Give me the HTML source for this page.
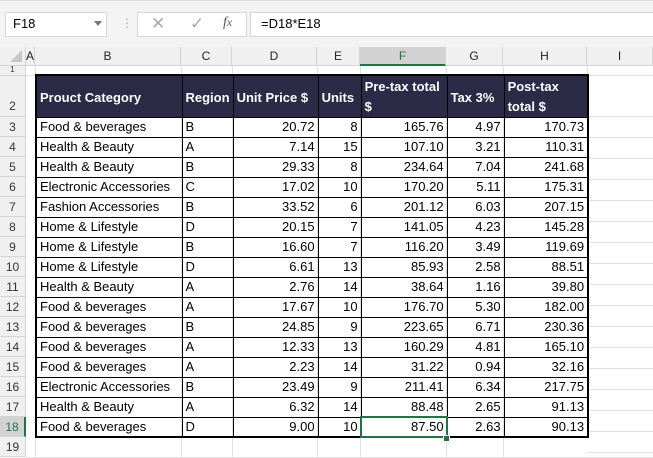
<!DOCTYPE html>
<html><head><style>
body{margin:0;width:653px;height:458px;background:#fff;font-family:"Liberation Sans",sans-serif;position:relative;overflow:hidden}
.top{position:absolute;left:0;top:0;width:653px;height:47px;background:#f3f3f3;border-top:1px solid #dcdcdc}
.box{position:absolute;background:#fff;border:1px solid #d6d6d6;top:12px;height:23px}
.ch{position:absolute;top:47px;height:19px;background:#f0f0f0;border-right:1px solid #d4d4d4;border-bottom:1px solid #d4d4d4;box-sizing:border-box;font-size:12px;text-align:center;line-height:19px;color:#222}
.rh{position:absolute;left:0;width:26px;background:#f0f0f0;border-bottom:1px solid #d4d4d4;border-right:1px solid #d4d4d4;box-sizing:border-box;font-size:12px;text-align:center;color:#333}
table{position:absolute;left:35px;top:74px;border-collapse:collapse;font-size:13px;table-layout:fixed}
td{border:1px solid #000;padding:0 3px;height:19px;white-space:nowrap;overflow:hidden;line-height:18px;box-sizing:border-box}
tr{height:20px}
td.n{text-align:right}
tr.h{height:42px}
tr.h td{background:#2b2a47;color:#fff;font-weight:bold;height:42px;line-height:20px;vertical-align:bottom;white-space:normal}
.gl{position:absolute;background:#e1e1e1}
</style></head><body>
<div class="top"></div>
<div class="box" style="left:5px;width:100px"><span style="position:absolute;left:7px;top:3px;font-size:13px">F18</span><span style="position:absolute;left:88px;top:8px;border-left:4px solid transparent;border-right:4px solid transparent;border-top:5px solid #777"></span></div>
<div style="position:absolute;left:121px;top:16px;color:#aaa;font-size:12px">⋮</div>
<div class="box" style="left:137px;width:108px"><span style="position:absolute;left:13px;top:1px;font-size:17px;color:#aaa">✕</span><span style="position:absolute;left:52px;top:1px;font-size:17px;color:#aaa">✓</span><span style="position:absolute;left:85px;top:2px;font-size:14px;font-style:italic;font-family:'Liberation Serif',serif;color:#555">f<small>x</small></span></div>
<div class="box" style="left:250px;width:410px"><span style="position:absolute;left:10px;top:3px;font-size:13px">=D18*E18</span></div>

<div class="ch" style="left:0;width:26px"><span style="position:absolute;right:3px;bottom:3px;border-left:12px solid transparent;border-bottom:12px solid #c6c6c6"></span></div>
<div class="ch" style="left:26px;width:9px">A</div>
<div class="ch" style="left:35px;width:146px">B</div>
<div class="ch" style="left:181px;width:51px">C</div>
<div class="ch" style="left:232px;width:85px">D</div>
<div class="ch" style="left:317px;width:43px">E</div>
<div class="ch" style="left:360px;width:86px;background:#d2d2d2;border-bottom:2px solid #217346;color:#217346">F</div>
<div class="ch" style="left:446px;width:57px">G</div>
<div class="ch" style="left:503px;width:84px">H</div>
<div class="ch" style="left:587px;width:66px">I</div>

<div class="rh" style="top:66px;height:10px;font-size:8px;line-height:8px">1</div>
<div class="rh" style="top:76px;height:41px;line-height:60px">2</div>
<div class="rh" style="top:117px;height:20px;line-height:20px">3</div>
<div class="rh" style="top:137px;height:20px;line-height:20px">4</div>
<div class="rh" style="top:157px;height:20px;line-height:20px">5</div>
<div class="rh" style="top:177px;height:20px;line-height:20px">6</div>
<div class="rh" style="top:197px;height:20px;line-height:20px">7</div>
<div class="rh" style="top:217px;height:20px;line-height:20px">8</div>
<div class="rh" style="top:237px;height:20px;line-height:20px">9</div>
<div class="rh" style="top:257px;height:20px;line-height:20px">10</div>
<div class="rh" style="top:277px;height:20px;line-height:20px">11</div>
<div class="rh" style="top:297px;height:20px;line-height:20px">12</div>
<div class="rh" style="top:317px;height:20px;line-height:20px">13</div>
<div class="rh" style="top:337px;height:20px;line-height:20px">14</div>
<div class="rh" style="top:357px;height:20px;line-height:20px">15</div>
<div class="rh" style="top:377px;height:20px;line-height:20px">16</div>
<div class="rh" style="top:397px;height:20px;line-height:20px">17</div>
<div class="rh" style="top:417px;height:20px;line-height:20px;background:#d2d2d2;color:#217346;border-right:2px solid #217346">18</div>
<div class="rh" style="top:437px;height:20px;line-height:20px">19</div>

<div class="gl" style="left:35px;top:66px;width:1px;height:392px"></div>
<div class="gl" style="left:181px;top:66px;width:1px;height:392px"></div>
<div class="gl" style="left:232px;top:66px;width:1px;height:392px"></div>
<div class="gl" style="left:317px;top:66px;width:1px;height:392px"></div>
<div class="gl" style="left:360px;top:66px;width:1px;height:392px"></div>
<div class="gl" style="left:446px;top:66px;width:1px;height:392px"></div>
<div class="gl" style="left:503px;top:66px;width:1px;height:392px"></div>
<div class="gl" style="left:587px;top:66px;width:1px;height:392px"></div>
<div class="gl" style="left:26px;top:75px;width:627px;height:1px"></div>
<div class="gl" style="left:26px;top:457px;width:627px;height:1px"></div>
<div class="gl" style="left:587px;top:96px;width:66px;height:361px;background:repeating-linear-gradient(#fff 0 20px,#e1e1e1 20px 21px)"></div>

<table style="border:2px solid #000">
<colgroup><col style="width:146px"><col style="width:51px"><col style="width:85px"><col style="width:43px"><col style="width:86px"><col style="width:57px"><col style="width:84px"></colgroup>
<tr class="h"><td style="vertical-align:middle;padding-top:4px">Prouct Category</td><td style="vertical-align:middle;padding-top:4px">Region</td><td style="vertical-align:middle;padding-top:4px">Unit Price $</td><td style="vertical-align:middle;padding-top:4px">Units</td><td>Pre-tax total $</td><td style="vertical-align:middle;padding-top:4px">Tax 3%</td><td>Post-tax total $</td></tr>
<tr><td>Food &amp; beverages</td><td>B</td><td class="n">20.72</td><td class="n">8</td><td class="n">165.76</td><td class="n">4.97</td><td class="n">170.73</td></tr>
<tr><td>Health &amp; Beauty</td><td>A</td><td class="n">7.14</td><td class="n">15</td><td class="n">107.10</td><td class="n">3.21</td><td class="n">110.31</td></tr>
<tr><td>Health &amp; Beauty</td><td>B</td><td class="n">29.33</td><td class="n">8</td><td class="n">234.64</td><td class="n">7.04</td><td class="n">241.68</td></tr>
<tr><td>Electronic Accessories</td><td>C</td><td class="n">17.02</td><td class="n">10</td><td class="n">170.20</td><td class="n">5.11</td><td class="n">175.31</td></tr>
<tr><td>Fashion Accessories</td><td>B</td><td class="n">33.52</td><td class="n">6</td><td class="n">201.12</td><td class="n">6.03</td><td class="n">207.15</td></tr>
<tr><td>Home &amp; Lifestyle</td><td>D</td><td class="n">20.15</td><td class="n">7</td><td class="n">141.05</td><td class="n">4.23</td><td class="n">145.28</td></tr>
<tr><td>Home &amp; Lifestyle</td><td>B</td><td class="n">16.60</td><td class="n">7</td><td class="n">116.20</td><td class="n">3.49</td><td class="n">119.69</td></tr>
<tr><td>Home &amp; Lifestyle</td><td>D</td><td class="n">6.61</td><td class="n">13</td><td class="n">85.93</td><td class="n">2.58</td><td class="n">88.51</td></tr>
<tr><td>Health &amp; Beauty</td><td>A</td><td class="n">2.76</td><td class="n">14</td><td class="n">38.64</td><td class="n">1.16</td><td class="n">39.80</td></tr>
<tr><td>Food &amp; beverages</td><td>A</td><td class="n">17.67</td><td class="n">10</td><td class="n">176.70</td><td class="n">5.30</td><td class="n">182.00</td></tr>
<tr><td>Food &amp; beverages</td><td>B</td><td class="n">24.85</td><td class="n">9</td><td class="n">223.65</td><td class="n">6.71</td><td class="n">230.36</td></tr>
<tr><td>Food &amp; beverages</td><td>A</td><td class="n">12.33</td><td class="n">13</td><td class="n">160.29</td><td class="n">4.81</td><td class="n">165.10</td></tr>
<tr><td>Food &amp; beverages</td><td>A</td><td class="n">2.23</td><td class="n">14</td><td class="n">31.22</td><td class="n">0.94</td><td class="n">32.16</td></tr>
<tr><td>Electronic Accessories</td><td>B</td><td class="n">23.49</td><td class="n">9</td><td class="n">211.41</td><td class="n">6.34</td><td class="n">217.75</td></tr>
<tr><td>Health &amp; Beauty</td><td>A</td><td class="n">6.32</td><td class="n">14</td><td class="n">88.48</td><td class="n">2.65</td><td class="n">91.13</td></tr>
<tr><td>Food &amp; beverages</td><td>D</td><td class="n">9.00</td><td class="n">10</td><td class="n" style="outline:2px solid #217346;outline-offset:-1px">87.50</td><td class="n">2.63</td><td class="n">90.13</td></tr>
</table>
<div style="position:absolute;left:443px;top:435px;width:5px;height:5px;background:#217346;border:1px solid #fff"></div>
</body></html>
